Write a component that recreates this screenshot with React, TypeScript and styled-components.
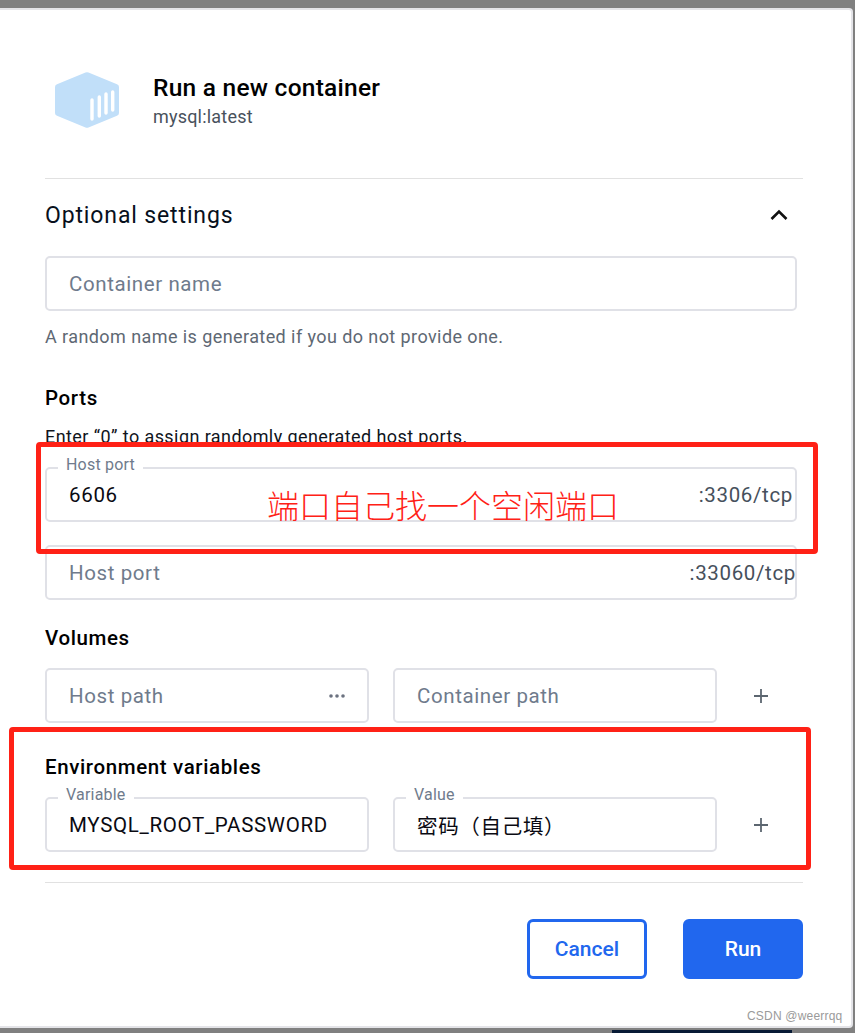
import React from "react";
import styled, { createGlobalStyle } from "styled-components";

const Global = createGlobalStyle`
  html, body { margin: 0; padding: 0; background: #808080; }
  body { font-family: Roboto, "Noto Sans CJK SC", sans-serif; width: 855px; height: 1033px; overflow: hidden; }
  #root { height: 1033px; }
`;

const Backdrop = styled.div`
  position: relative;
  width: 855px;
  height: 1033px;
  padding-top: 8px;
  box-sizing: border-box;
  overflow: hidden;
`;

const Dialog = styled.div`
  box-sizing: border-box;
  width: 853px;
  height: 1020px;
  background: #fff;
  border-top: 2px solid #e4e4e8;
  border-bottom: 2px solid #e4e4e8;
  border-right: 2px solid #e4e4e8;
  border-bottom-right-radius: 4px;
  border-top-right-radius: 4px;
  padding: 0 48px 0 45px;
  display: flex;
  flex-direction: column;
`;

const Header = styled.header`
  display: flex;
  align-items: center;
  height: 169px;
  padding: 12px 0 0 10px;
  box-sizing: border-box;
  gap: 34px;
  border-bottom: 1px solid #e1e1e1;
  flex: none;
`;

const TitleBlock = styled.div`
  display: flex;
  flex-direction: column;
  gap: 3px;
  margin-top: 1px;
`;

const Title = styled.div`
  font-size: 24.5px;
  line-height: 30px;
  font-weight: 500;
  color: #000;
  letter-spacing: 0.25px;
`;

const Subtitle = styled.div`
  font-size: 18px;
  line-height: 22px;
  color: #48515c;
  letter-spacing: 0.2px;
`;

const Collapse = styled.div`
  display: flex;
  align-items: center;
  justify-content: space-between;
  height: 77px;
  padding: 0 12px 5px 0;
  box-sizing: border-box;
  flex: none;
  color: #000;
`;

const CollapseTitle = styled.div`
  font-size: 23px;
  letter-spacing: 0.87px;
  color: #07101c;
`;

const Field = styled.div<{ $w?: number }>`
  position: relative;
  box-sizing: border-box;
  width: ${(p) => (p.$w ? `${p.$w}px` : "752px")};
  height: 55px;
  border: 2px solid #e0e1e7;
  border-radius: 5px;
  display: flex;
  align-items: center;
  justify-content: space-between;
  padding: 0 0 0 22px;
  font-size: 20.5px;
  flex: none;
`;

const Placeholder = styled.span`
  color: #6f7b8c;
  letter-spacing: 0.6px;
`;

const Value = styled.span`
  color: #0a0a12;
  letter-spacing: 0.68px;
  white-space: nowrap;
`;

const Suffix = styled.span<{ $right: number }>`
  color: #46505c;
  font-size: 20.5px;
  letter-spacing: 0.65px;
  margin-right: ${(p) => p.$right}px;
`;

const Floating = styled.label`
  position: absolute;
  top: -14px;
  left: 11px;
  padding: 0 8px;
  background: #fff;
  font-size: 16px;
  line-height: 20px;
  color: #6f7b8c;
  letter-spacing: 0.2px;
`;

const Hint = styled.p<{ $top: number; $color?: string }>`
  margin: ${(p) => p.$top}px 0 0;
  font-size: 18px;
  line-height: 20px;
  letter-spacing: 0.42px;
  color: ${(p) => p.$color || "#5e6873"};
`;

const SectionLabel = styled.h3<{ $top: number }>`
  margin: ${(p) => p.$top}px 0 0;
  font-size: 20.5px;
  line-height: 24px;
  font-weight: 500;
  color: #000;
  letter-spacing: 0.62px;
`;

const Stack = styled.div<{ $top: number; $gap?: number }>`
  display: flex;
  flex-direction: column;
  gap: ${(p) => p.$gap ?? 0}px;
  margin-top: ${(p) => p.$top}px;
  flex: none;
`;

const Row = styled.div<{ $top: number }>`
  display: flex;
  align-items: center;
  gap: 24px;
  margin-top: ${(p) => p.$top}px;
  flex: none;
`;

const AddButton = styled.span`
  width: 40px;
  display: flex;
  justify-content: center;
  color: #5c6670;
`;

const MoreIcon = styled.svg`
  margin-right: 22px;
`;

const Footer = styled.footer`
  margin-top: 30px;
  border-top: 1px solid #e1e1e1;
  padding-top: 36px;
  display: flex;
  justify-content: flex-end;
  gap: 36px;
`;

const ActionButton = styled.button<{ $primary?: boolean }>`
  box-sizing: border-box;
  width: 120px;
  height: 60px;
  border-radius: 6px;
  border: 3px solid #2167ee;
  background: ${(p) => (p.$primary ? "#2167ee" : "#fff")};
  color: ${(p) => (p.$primary ? "#fff" : "#2167ee")};
  font-family: Roboto, sans-serif;
  font-size: 21px;
  font-weight: 500;
`;

const Annotation = styled.div<{ $x: number; $y: number; $w: number; $h: number }>`
  position: absolute;
  box-sizing: border-box;
  left: ${(p) => p.$x}px;
  top: ${(p) => p.$y}px;
  width: ${(p) => p.$w}px;
  height: ${(p) => p.$h}px;
  border: 5px solid #ff2116;
  border-radius: 4px;
  pointer-events: none;
`;

const AnnotationText = styled.div`
  position: absolute;
  left: 267px;
  top: 484px;
  font-family: "Noto Sans CJK SC", sans-serif;
  font-size: 32px;
  font-weight: 300;
  line-height: 40px;
  color: #ff2116;
  white-space: nowrap;
`;

const Watermark = styled.div`
  position: absolute;
  left: 747px;
  top: 1008px;
  font-family: "Liberation Sans", sans-serif;
  font-size: 12px;
  line-height: 16px;
  letter-spacing: 0.2px;
  color: #9a9a9a;
`;

const TaskStrip = styled.div`
  position: absolute;
  left: 612px;
  top: 1030px;
  width: 180px;
  height: 3px;
  background: #071a35;
`;

const Plus = () => (
  <svg width="18" height="18" viewBox="0 0 18 18" fill="none" stroke="currentColor" strokeWidth="1.8">
    <path d="M9 2v14M2 9h14" />
  </svg>
);

export default function App() {
  return (
    <Backdrop>
      <Global />
      <Dialog>
        <Header>
          <svg width="64" height="56" viewBox="0 0 64 56">
            <path
              d="M30.5 0.6a4 4 0 0 1 3 0L62 12.2a3 3 0 0 1 2 2.8v26a3 3 0 0 1-2 2.8L33.5 55.4a4 4 0 0 1-3 0L2 43.8a3 3 0 0 1-2-2.8V15a3 3 0 0 1 2-2.8z"
              fill="#c1dff9"
            />
            <g stroke="#fff" strokeWidth="3.4" strokeLinecap="round">
              <path d="M37 28v19M44.3 25v19M51 22v19M57.7 20v18" />
            </g>
          </svg>
          <TitleBlock>
            <Title>Run a new container</Title>
            <Subtitle>mysql:latest</Subtitle>
          </TitleBlock>
        </Header>

        <Collapse>
          <CollapseTitle>Optional settings</CollapseTitle>
          <svg width="24" height="24" viewBox="0 0 24 24" fill="none" stroke="#111" strokeWidth="2.6">
            <path d="M4.5 16l7.5-7.5 7.5 7.5" />
          </svg>
        </Collapse>

        <Field>
          <Placeholder>Container name</Placeholder>
        </Field>
        <Hint $top={16}>A random name is generated if you do not provide one.</Hint>

        <SectionLabel $top={39}>Ports</SectionLabel>
        <Hint $top={17} $color="#10151c">Enter “0” to assign randomly generated host ports.</Hint>
        <Stack $top={20} $gap={23}>
          <Field>
            <Floating>Host port</Floating>
            <Value>6606</Value>
            <Suffix $right={2}>:3306/tcp</Suffix>
          </Field>
          <Field>
            <Placeholder>Host port</Placeholder>
            <Suffix $right={-1}>:33060/tcp</Suffix>
          </Field>
        </Stack>

        <SectionLabel $top={26}>Volumes</SectionLabel>
        <Row $top={18}>
          <Field $w={324}>
            <Placeholder>Host path</Placeholder>
            <MoreIcon width="16" height="6" viewBox="0 0 16 6" fill="#6b7280">
              <circle cx="2" cy="3" r="1.8" />
              <circle cx="8" cy="3" r="1.8" />
              <circle cx="14" cy="3" r="1.8" />
            </MoreIcon>
          </Field>
          <Field $w={324}>
            <Placeholder>Container path</Placeholder>
          </Field>
          <AddButton>
            <Plus />
          </AddButton>
        </Row>

        <SectionLabel $top={32}>Environment variables</SectionLabel>
        <Row $top={18}>
          <Field $w={324}>
            <Floating>Variable</Floating>
            <Value>MYSQL_ROOT_PASSWORD</Value>
          </Field>
          <Field $w={324}>
            <Floating>Value</Floating>
            <Value>密码（自己填）</Value>
          </Field>
          <AddButton>
            <Plus />
          </AddButton>
        </Row>

        <Footer>
          <ActionButton>Cancel</ActionButton>
          <ActionButton $primary>Run</ActionButton>
        </Footer>
      </Dialog>

      <Annotation $x={36} $y={442} $w={782} $h={112} />
      <Annotation $x={9} $y={727} $w={802} $h={143} />
      <AnnotationText>端口自己找一个空闲端口</AnnotationText>
      <Watermark>CSDN @weerrqq</Watermark>
      <TaskStrip />
    </Backdrop>
  );
}
